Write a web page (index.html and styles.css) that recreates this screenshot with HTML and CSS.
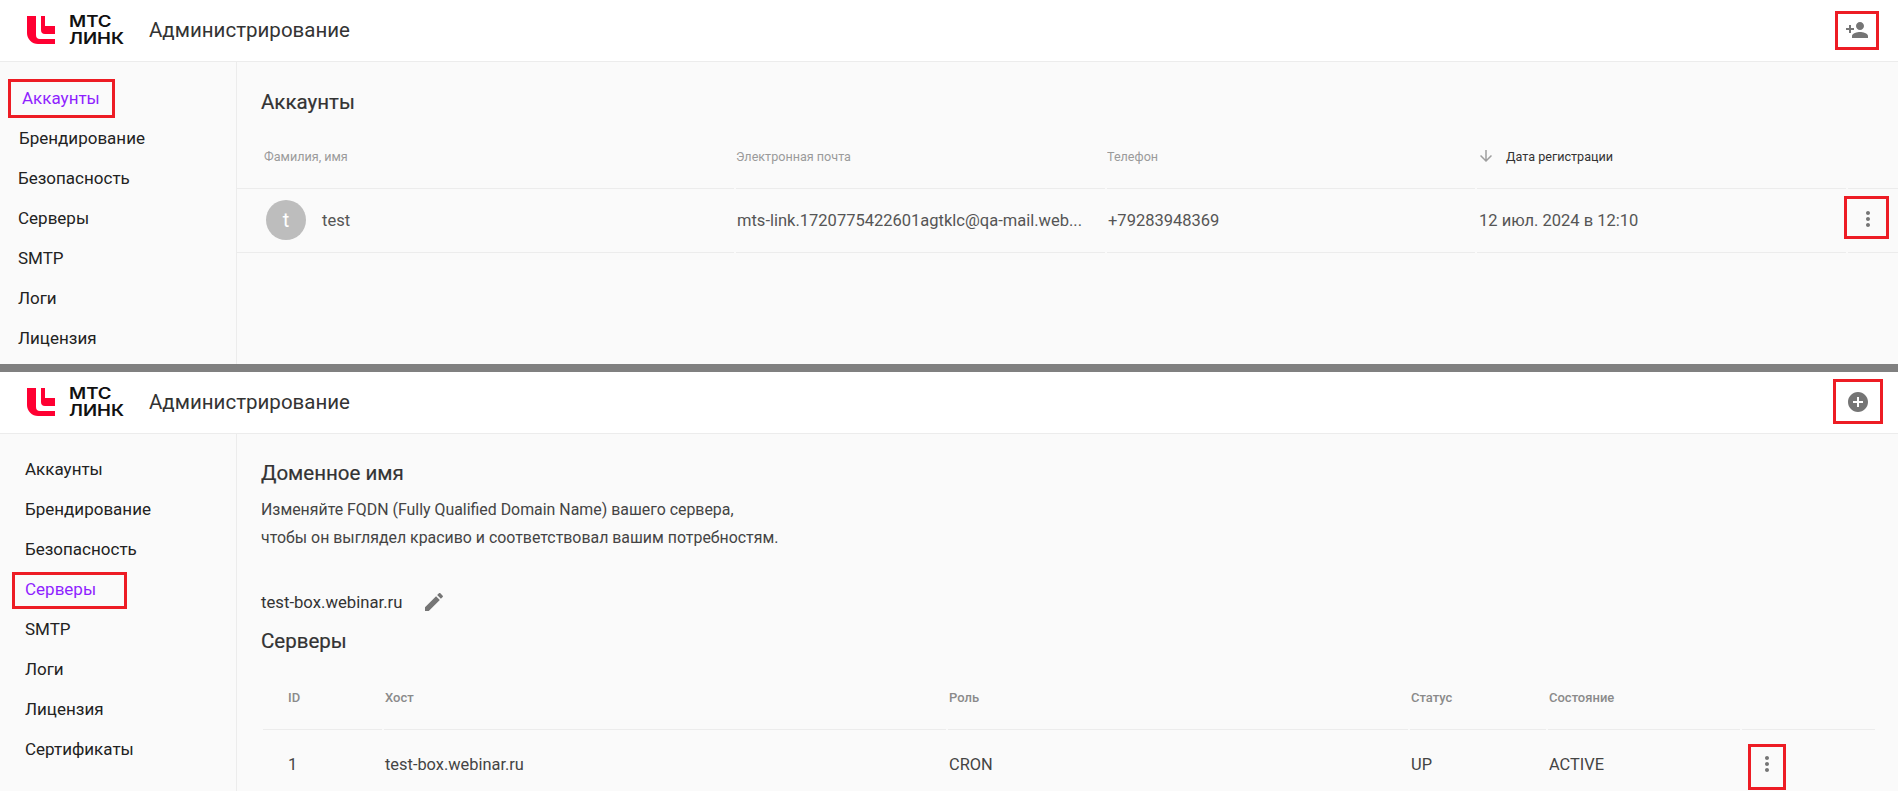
FILE: index.html
```html
<!DOCTYPE html>
<html lang="ru">
<head>
<meta charset="utf-8">
<title>Администрирование</title>
<link rel="stylesheet" href="styles.css">
</head>
<body>
<section class="panel panel-accounts">
  <header class="topbar">
    <svg class="logo-mark" width="28" height="28" viewBox="27 15 28 28"><path d="M27 15h9v19a4 4 0 0 0 4 4h15v5H38a11 11 0 0 1-11-11z"/><path d="M41 15h4v10h10v8H45a4 4 0 0 1-4-4z"/></svg>
    <div class="logo-text"><span class="logo-inner">МТС<br>ЛИНК</span></div>
    <div class="app-title">Администрирование</div>
    <svg class="top-icon icon-person" width="24" height="24" viewBox="0 0 24 24"><path d="M15 12c2.21 0 4-1.79 4-4s-1.79-4-4-4-4 1.79-4 4 1.79 4 4 4zm-9-2V7H4v3H1v2h3v3h2v-3h3v-2H6zm9 4c-2.67 0-8 1.34-8 4v2h16v-2c0-2.66-5.33-4-8-4z"/></svg>
  </header>
  <div class="body">
    <nav class="sidenav sidenav-a">
      <a class="nav-item active shift-active">Аккаунты</a>
      <a class="nav-item shift-one">Брендирование</a>
      <a class="nav-item">Безопасность</a>
      <a class="nav-item">Серверы</a>
      <a class="nav-item">SMTP</a>
      <a class="nav-item">Логи</a>
      <a class="nav-item">Лицензия</a>
    </nav>
    <main class="content">
      <h2 class="title title-accounts">Аккаунты</h2>
      <div class="grid accounts-grid">
        <div class="cell head pad-name">Фамилия, имя</div>
        <div class="cell head pad-email">Электронная почта</div>
        <div class="cell head pad-phone">Телефон</div>
        <div class="cell head head-sorted pad-date">
          <svg class="sort-icon" width="18" height="18" viewBox="0 0 24 24"><path d="M20 12l-1.41-1.41L13 16.17V4h-2v12.17l-5.58-5.59L4 12l8 8 8-8z"/></svg>
          <span>Дата регистрации</span>
        </div>
        <div class="cell head"></div>

        <div class="cell row pad-user"><span class="avatar">t</span><span class="user-name">test</span></div>
        <div class="cell row pad-email-v">mts-link.1720775422601agtklc@qa-mail.web...</div>
        <div class="cell row pad-phone-v">+79283948369</div>
        <div class="cell row pad-date-v">12 июл. 2024 в 12:10</div>
        <div class="cell row pad-more-a"><svg class="more more-a" width="24" height="24" viewBox="0 0 24 24"><path d="M12 8c1.1 0 2-.9 2-2s-.9-2-2-2-2 .9-2 2 .9 2 2 2zm0 2c-1.1 0-2 .9-2 2s.9 2 2 2 2-.9 2-2-.9-2-2-2zm0 6c-1.1 0-2 .9-2 2s.9 2 2 2 2-.9 2-2-.9-2-2-2z"/></svg></div>
      </div>
    </main>
  </div>
  <span class="mark mark-a-nav"></span>
  <span class="mark mark-a-top"></span>
  <span class="mark mark-a-more"></span>
</section>

<div class="divider"></div>

<section class="panel panel-servers">
  <header class="topbar">
    <svg class="logo-mark" width="28" height="28" viewBox="27 15 28 28"><path d="M27 15h9v19a4 4 0 0 0 4 4h15v5H38a11 11 0 0 1-11-11z"/><path d="M41 15h4v10h10v8H45a4 4 0 0 1-4-4z"/></svg>
    <div class="logo-text"><span class="logo-inner">МТС<br>ЛИНК</span></div>
    <div class="app-title">Администрирование</div>
    <svg class="top-icon icon-add" width="24" height="24" viewBox="0 0 24 24"><path d="M12 2C6.48 2 2 6.48 2 12s4.48 10 10 10 10-4.48 10-10S17.52 2 12 2zm5 11h-4v4h-2v-4H7v-2h4V7h2v4h4v2z"/></svg>
  </header>
  <div class="body">
    <nav class="sidenav sidenav-b">
      <a class="nav-item">Аккаунты</a>
      <a class="nav-item">Брендирование</a>
      <a class="nav-item">Безопасность</a>
      <a class="nav-item active">Серверы</a>
      <a class="nav-item">SMTP</a>
      <a class="nav-item">Логи</a>
      <a class="nav-item">Лицензия</a>
      <a class="nav-item">Сертификаты</a>
    </nav>
    <main class="content">
      <h2 class="title title-domain">Доменное имя</h2>
      <p class="lead">Изменяйте FQDN (Fully Qualified Domain Name) вашего сервера,<br>чтобы он выглядел красиво и соответствовал вашим потребностям.</p>
      <div class="domain">
        <span>test-box.webinar.ru</span>
        <svg class="edit" width="24" height="24" viewBox="0 0 24 24"><path d="M3 17.25V21h3.75L17.81 9.94l-3.75-3.75L3 17.25zM20.71 7.04c.39-.39.39-1.02 0-1.41l-2.34-2.34c-.39-.39-1.02-.39-1.41 0l-1.83 1.83 3.75 3.75 1.83-1.83z"/></svg>
      </div>
      <h2 class="title title-servers">Серверы</h2>
      <div class="grid servers-grid">
        <div class="cell head strong pad-id">ID</div>
        <div class="cell head strong pad-s">Хост</div>
        <div class="cell head strong pad-s">Роль</div>
        <div class="cell head strong pad-s">Статус</div>
        <div class="cell head strong pad-s">Состояние</div>
        <div class="cell head"></div>

        <div class="cell srow pad-id">1</div>
        <div class="cell srow pad-s">test-box.webinar.ru</div>
        <div class="cell srow pad-s">CRON</div>
        <div class="cell srow pad-s">UP</div>
        <div class="cell srow pad-s">ACTIVE</div>
        <div class="cell srow pad-more-b"><svg class="more" width="24" height="24" viewBox="0 0 24 24"><path d="M12 8c1.1 0 2-.9 2-2s-.9-2-2-2-2 .9-2 2 .9 2 2 2zm0 2c-1.1 0-2 .9-2 2s.9 2 2 2 2-.9 2-2-.9-2-2-2zm0 6c-1.1 0-2 .9-2 2s.9 2 2 2 2-.9 2-2-.9-2-2-2z"/></svg></div>
      </div>
    </main>
  </div>
  <span class="mark mark-b-nav"></span>
  <span class="mark mark-b-top"></span>
  <span class="mark mark-b-more"></span>
</section>
</body>
</html>
```
FILE: styles.css
```css
* { box-sizing: border-box; }
html, body { margin: 0; padding: 0; }
body {
  width: 1898px;
  height: 791px;
  overflow: hidden;
  background: #fafafa;
  font-family: Roboto, "Liberation Sans", sans-serif;
  color: #333;
}
.panel { position: relative; overflow: hidden; background: #fafafa; }
.panel-accounts { height: 364px; }
.panel-servers { height: 419px; }
.divider { height: 8px; background: #808080; }

.topbar {
  height: 62px;
  display: flex;
  align-items: center;
  padding-left: 27px;
  padding-bottom: 1px;
  background: #fff;
  border-bottom: 1px solid #ececec;
}
.logo-mark { fill: #ff0032; flex: none; }
.logo-text {
  width: 55px;
  flex: none;
  margin-left: 14px;
  font-family: Inter, sans-serif;
  font-size: 15.5px;
  font-weight: 600;
  line-height: 17px;
  color: #111;
}
.logo-inner {
  display: block;
  transform: scaleX(1.2);
  transform-origin: left center;
}
.app-title {
  margin-left: 25px;
  font-size: 20.5px;
  color: #333;
}
.top-icon { fill: #757575; position: absolute; top: 18px; }
.icon-person { left: 1845px; }
.icon-add { left: 1846px; }

.body { display: flex; height: calc(100% - 62px); }
.sidenav {
  width: 237px;
  flex: none;
  padding-top: 16px;
  border-right: 1px solid #ececec;
}
.sidenav-a { padding-left: 18px; padding-top: 17px; }
.sidenav-b { padding-left: 25px; }
.nav-item {
  display: block;
  height: 40px;
  line-height: 39px;
  font-size: 17px;
  color: #222;
}
.nav-item.active { color: #8f1fff; }
.shift-active { padding-left: 4px; }
.shift-one { padding-left: 1px; }

.content { flex: 1; min-width: 0; }
.title {
  margin: 0;
  font-size: 20.5px;
  font-weight: 400;
  line-height: 24px;
  color: #333;
  padding-left: 24px;
  -webkit-text-stroke: 0.2px #333;
}
.title-accounts { margin-top: 28px; }
.title-domain { margin-top: 27px; }
.title-servers { margin-top: 15px; }
.lead {
  margin: 11px 0 0;
  padding-left: 24px;
  font-size: 15.9px;
  line-height: 28px;
  color: #444;
}
.domain {
  margin-top: 38px;
  padding-left: 24px;
  display: flex;
  align-items: center;
  height: 24px;
  font-size: 16.7px;
  color: #333;
  gap: 20px;
}
.edit { fill: #757575; }

.grid { display: grid; column-gap: 2px; }
.accounts-grid {
  margin-top: 12px;
  grid-template-columns: 497px 369px 368px 369px 50px;
}
.servers-grid {
  margin-top: 14px;
  margin-left: 26px;
  grid-template-columns: 119px 562px 460px 136px 192px 133px;
  width: 1612px;
}
.cell {
  display: flex;
  align-items: center;
  border-bottom: 1px solid #ececec;
  white-space: nowrap;
  overflow: hidden;
}
.head { height: 63px; padding-bottom: 2px; font-size: 12.6px; color: #9a9a9a; }
.head.strong { font-size: 13px; font-weight: 500; color: #8a8a8a; }
.head-sorted { color: #333; }
.row { height: 64px; padding-bottom: 1px; font-size: 16.5px; color: #555; }
.srow { height: 69px; font-size: 16.4px; color: #444; }

.pad-name { padding-left: 27px; }
.pad-email { padding-left: 0; }
.pad-phone { padding-left: 0; }
.pad-date { padding-left: 0; }
.pad-user { padding-left: 29px; }
.pad-email-v { padding-left: 1px; }
.pad-phone-v { padding-left: 1px; }
.pad-date-v { padding-left: 2px; }
.pad-more-a { padding-left: 8px; }
.pad-id { padding-left: 25px; }
.pad-s { padding-left: 1px; }
.pad-more-b { padding-left: 13px; }

.sort-icon { fill: #9e9e9e; margin-right: 11px; flex: none; }
.avatar {
  width: 40px;
  height: 40px;
  border-radius: 50%;
  background: #bdbdbd;
  color: #fff;
  font-size: 20px;
  display: flex;
  align-items: center;
  justify-content: center;
  flex: none;
}
.user-name { margin-left: 16px; }
.more { fill: #757575; }
.more-a { margin-bottom: 3px; }

.mark { position: absolute; border: 3px solid #ed1c24; }
.mark-a-nav { left: 8px; top: 79px; width: 107px; height: 39px; }
.mark-a-top { left: 1835px; top: 11px; width: 44px; height: 39px; }
.mark-a-more { left: 1844px; top: 196px; width: 45px; height: 43px; }
.mark-b-nav { left: 12px; top: 200px; width: 115px; height: 37px; }
.mark-b-top { left: 1833px; top: 7px; width: 50px; height: 45px; }
.mark-b-more { left: 1748px; top: 372px; width: 38px; height: 46px; }
```
